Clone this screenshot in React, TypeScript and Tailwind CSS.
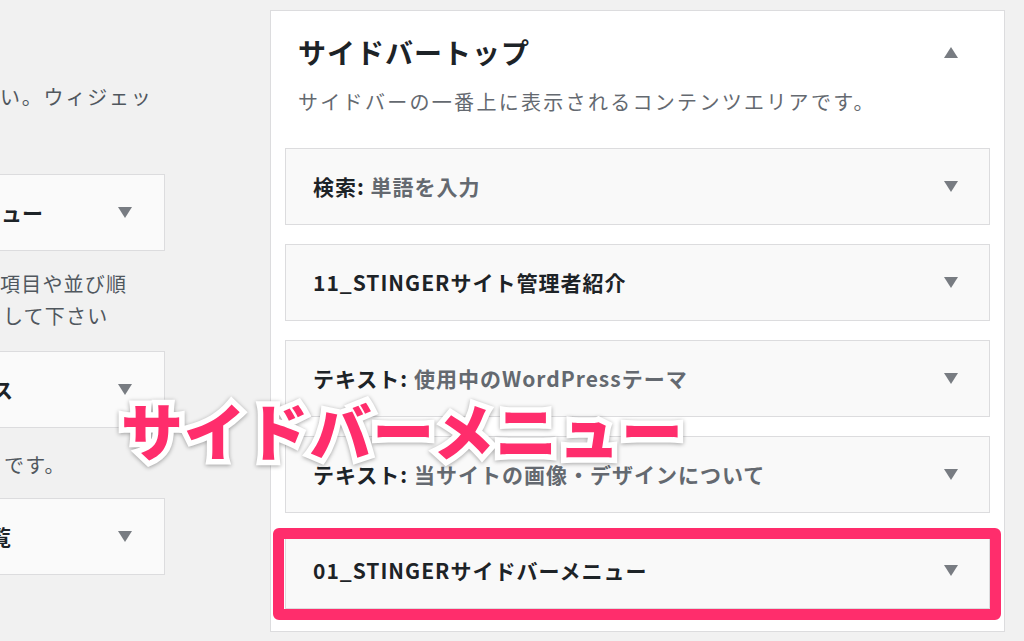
import React from "react";

const font = { fontFamily: '"Noto Sans CJK JP", "Noto Sans", sans-serif' };

function Down({ className = "" }: { className?: string }) {
  return (
    <svg width="14" height="11" viewBox="0 0 14 11" className={className}>
      <polygon points="0,0 14,0 7,11" fill="#787c82" />
    </svg>
  );
}

function Up() {
  return (
    <svg width="14" height="11" viewBox="0 0 14 11">
      <polygon points="0,11 14,11 7,0" fill="#787c82" />
    </svg>
  );
}

function Widget({ bold, rest }: { bold: string; rest?: string }) {
  return (
    <div className="h-[77px] shrink-0 bg-[#f9f9f9] border border-[#dcdcde] flex items-center justify-between pl-[27px] pr-[31px]">
      <div className="text-[21px] tracking-[1px] leading-none whitespace-nowrap">
        <span className="font-bold text-[#1d2327]">{bold}</span>
        {rest && <span className="font-bold text-[#646970]">{rest}</span>}
      </div>
      <Down />
    </div>
  );
}

function LeftBox({ text, shift }: { text: string; shift: string }) {
  return (
    <div className="h-[77px] w-[166px] -ml-px bg-[#fafafa] border border-[#dcdcde] flex items-center overflow-hidden">
      <div className={`flex-1 text-[21px] font-bold text-[#1d2327] whitespace-nowrap ${shift}`}>{text}</div>
      <Down className="mr-[32px] shrink-0" />
    </div>
  );
}

export default function App() {
  return (
    <div className="relative w-[1024px] h-[641px] overflow-hidden bg-[#f1f1f1]" style={font}>
      <div className="flex items-start">
        {/* left column */}
        <div className="w-[270px] shrink-0 flex flex-col text-[#50575e]">
          <div className="mt-[81px] h-[32px] leading-[32px] text-[20px] tracking-[1.8px] whitespace-nowrap">い。ウィジェッ</div>
          <div className="mt-[61px]">
            <LeftBox text="ニュー" shift="-ml-[20px]" />
          </div>
          <div className="mt-[17px] text-[20px] leading-[32px] tracking-[1.2px] whitespace-nowrap">
            <div>項目や並び順</div>
            <div className="pl-[3px]">して下さい</div>
          </div>
          <div className="mt-[19px]">
            <LeftBox text="ス" shift="-ml-[8px]" />
          </div>
          <div className="mt-[21px] h-[32px] leading-[32px] text-[20px] tracking-[1.2px] whitespace-nowrap pl-[4px]">です。</div>
          <div className="mt-[17px]">
            <LeftBox text="覧" shift="-ml-[10px]" />
          </div>
        </div>

        {/* right panel */}
        <div className="mt-[10px] w-[735px] h-[622px] shrink-0 bg-white border border-[#dcdcde] px-[14px] pt-[23px] flex flex-col">
          <div className="flex items-center justify-between pl-[13px] pr-[32px] h-[36px]">
            <div className="text-[28px] font-bold tracking-[1px] text-[#1d2327] leading-none whitespace-nowrap">サイドバートップ</div>
            <Up />
          </div>
          <div className="mt-[17px] pl-[13px] h-[30px] leading-[30px] text-[20px] tracking-[2.3px] text-[#646970] whitespace-nowrap">
            サイドバーの一番上に表示されるコンテンツエリアです。
          </div>
          <div className="mt-[31px] flex flex-col gap-[19px]">
            <Widget bold="検索:" rest=" 単語を入力" />
            <Widget bold="11_STINGERサイト管理者紹介" />
            <Widget bold="テキスト:" rest=" 使用中のWordPressテーマ" />
            <Widget bold="テキスト:" rest=" 当サイトの画像・デザインについて" />
            <Widget bold="01_STINGERサイドバーメニュー" />
          </div>
        </div>
      </div>

      {/* pink highlight ring */}
      <div className="absolute left-[273px] top-[528px] w-[728px] h-[92px] border-[11px] border-[#ff2d6c] rounded-[6px]" />

      {/* overlay caption */}
      <div
        className="absolute left-[121px] top-[398px] text-[62px] tracking-[0.8px] leading-none font-black text-[#ff2d6c] whitespace-nowrap [paint-order:stroke_fill] [-webkit-text-stroke:11px_white] drop-shadow-[0_1px_2px_rgba(0,0,0,0.35)]"
      >
        サイドバーメニュー
      </div>
    </div>
  );
}
